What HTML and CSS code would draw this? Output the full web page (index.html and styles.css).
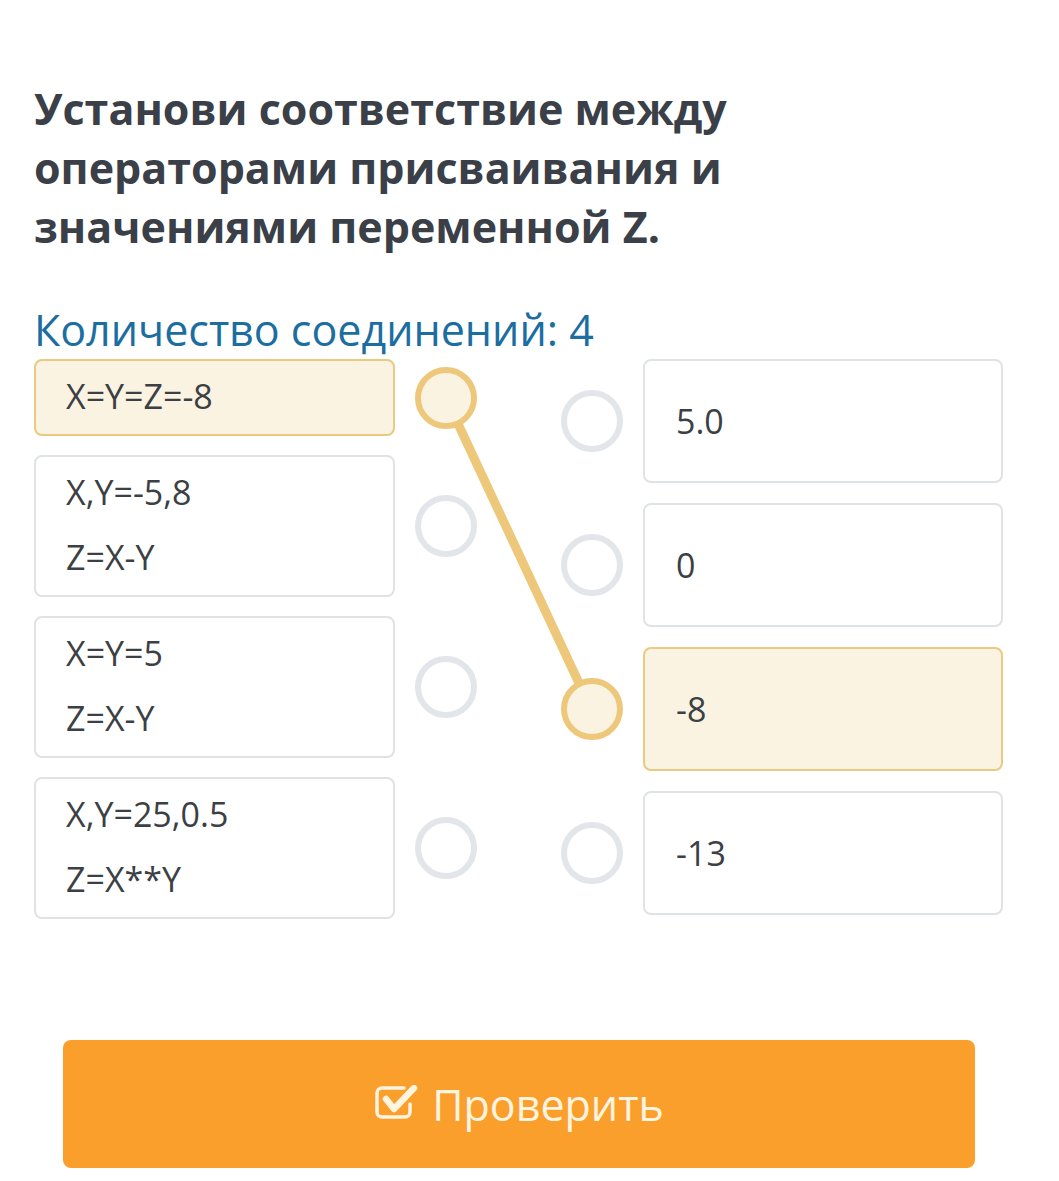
FILE: index.html
```html
<!DOCTYPE html>
<html>
<head>
  <title>Установи соответствие</title>
  <link rel="stylesheet" href="styles.css">
</head>
<body>
  <h1 class="title">Установи соответствие между операторами присваивания и значениями переменной Z.</h1>
  <p class="count">Количество соединений: 4</p>

  <div class="board">
    <!-- connection line, drawn under the dots -->
    <svg class="links" width="969" height="560">
      <line x1="412" y1="39" x2="558" y2="352" stroke="#eec87a" stroke-width="9" stroke-linecap="round"/>
    </svg>

    <div class="col col-left">
      <div class="row">
        <div class="card active"><p>X=Y=Z=-8</p></div>
        <span class="dot active"></span>
      </div>
      <div class="row">
        <div class="card"><p>X,Y=-5,8</p><p>Z=X-Y</p></div>
        <span class="dot"></span>
      </div>
      <div class="row">
        <div class="card"><p>X=Y=5</p><p>Z=X-Y</p></div>
        <span class="dot"></span>
      </div>
      <div class="row">
        <div class="card"><p>X,Y=25,0.5</p><p>Z=X**Y</p></div>
        <span class="dot"></span>
      </div>
    </div>

    <div class="col col-right">
      <div class="row">
        <span class="dot"></span>
        <div class="card card-right"><p>5.0</p></div>
      </div>
      <div class="row">
        <span class="dot"></span>
        <div class="card card-right"><p>0</p></div>
      </div>
      <div class="row">
        <span class="dot active"></span>
        <div class="card card-right active"><p>-8</p></div>
      </div>
      <div class="row">
        <span class="dot"></span>
        <div class="card card-right"><p>-13</p></div>
      </div>
    </div>
  </div>

  <button class="check-btn">
    <svg class="check-icon" width="44" height="34" viewBox="0 0 44 34">
      <path d="M30 3 H8 a5 5 0 0 0 -5 5 v19 a5 5 0 0 0 5 5 h23 a5 5 0 0 0 5 -5 v-8" fill="none" stroke="#fff4e0" stroke-width="3.5" stroke-linecap="round"/>
      <polyline points="12,14 20,24 40,3" fill="none" stroke="#fff4e0" stroke-width="6.5" stroke-linecap="round" stroke-linejoin="round"/>
    </svg>
    <span>Проверить</span>
  </button>
</body>
</html>
```

FILE: styles.css
```css
body {
  font-family: "Open Sans", "Noto Sans", sans-serif;
  background-color: #fff;
  margin: 0;
  padding: 79px 56px 0 34px;
}

.title {
  max-width: 740px;
  margin: 0;
  font-size: 43px;
  line-height: 59px;
  font-weight: 700;
  color: #3a3f48;
}

.count {
  margin: 48px 0 3px;
  font-size: 43px;
  line-height: 52px;
  color: #1b6e9f;
}

.board {
  position: relative;
  display: flex;
  justify-content: space-between;
  align-items: flex-start;
  width: 969px;
}

.links {
  position: absolute;
  left: 0;
  top: 0;
  z-index: 0;
}

.col {
  display: flex;
  flex-direction: column;
}

.col-left {
  gap: 19px;
}

.col-right {
  gap: 20px;
}

.row {
  display: flex;
  align-items: center;
  gap: 20px;
}

.card {
  width: 361px;
  box-sizing: border-box;
  border: 2px solid #dfe3e6;
  border-radius: 8px;
  background-color: #fff;
  padding: 3px 20px 5px 30px;
  font-size: 34px;
  line-height: 65px;
  color: #3c3f44;
}

.card p {
  margin: 0;
}

.card-right {
  width: 360px;
  min-height: 124px;
  display: flex;
  align-items: center;
  padding: 0 20px 0 31px;
}

.card.active {
  background-color: #fbf3e2;
  border-color: #e9ca80;
}

.dot {
  position: relative;
  z-index: 1;
  flex: none;
  width: 62px;
  height: 62px;
  box-sizing: border-box;
  border: 6px solid #e2e5e9;
  border-radius: 50%;
  background-color: #fff;
}

.dot.active {
  border-color: #eec87a;
  background-color: #fbf3e2;
}

.check-btn {
  display: flex;
  align-items: center;
  justify-content: center;
  gap: 14px;
  width: 912px;
  height: 128px;
  margin: 121px 0 0 29px;
  border: none;
  border-radius: 8px;
  background-color: #fa9f2c;
  color: #fff4e0;
  font-family: "Open Sans", "Noto Sans", sans-serif;
  font-size: 43px;
  cursor: pointer;
}

.check-icon {
  margin-top: -4px;
}
```
